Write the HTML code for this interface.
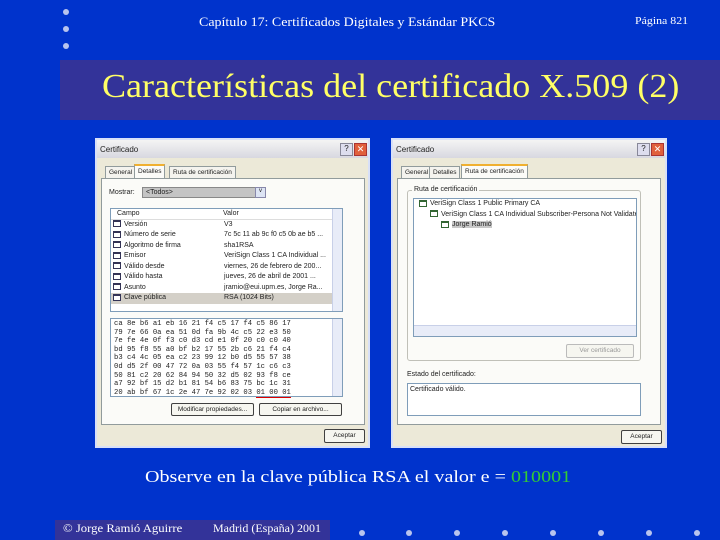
<!DOCTYPE html>
<html><head><meta charset="utf-8"><style>
*{margin:0;padding:0;box-sizing:border-box}
body{width:720px;height:540px;background:#0033cc;position:relative;overflow:hidden;font-family:"Liberation Serif",serif}
.a{position:absolute}
.sx{transform-origin:0 0;white-space:nowrap}
.dot{position:absolute;width:6px;height:6px;border-radius:50%;background:#b8c4ee}
.dlg{position:absolute;background:#ece9d8;border:2px solid #d8e0f8;font-family:"Liberation Sans",sans-serif;font-size:7px;color:#222}
.tb{position:absolute;left:0;right:0;top:0;height:18px;background:linear-gradient(#f4f4f4,#d8d8e0);font-size:8px;padding:5px 3px}
.btn{position:absolute;background:#f6f6f0;border:1px solid #404040;border-radius:2px;font-size:6.5px;text-align:center;line-height:12px}
.wb{position:absolute;background:#fff;border:1px solid #7f9db9}
.sb{position:absolute;background:#e8ecf8;border-left:1px solid #c8d0e8}
.tab{position:absolute;height:12px;border:1px solid #919b9c;border-bottom:none;background:#f4f3ee;font-size:6.5px;padding:2px 3px}
.row{height:10.5px;line-height:10.5px;white-space:nowrap;overflow:hidden}
.ic{display:inline-block;width:8px;height:7px;border:1px solid #335;border-top:2px solid #335;background:#fff;vertical-align:middle;margin:0 3px 0 2px}
.hex{font-family:"Liberation Mono",monospace;font-size:7.2px;line-height:8.6px;white-space:pre;padding:1px 3px}
</style></head><body>
<div class="dot" style="left:63px;top:9px"></div>
<div class="dot" style="left:63px;top:26px"></div>
<div class="dot" style="left:63px;top:43px"></div>
<div class="a sx" style="left:199px;top:15px;color:#fff;font-size:12.5px;transform:scaleX(1.117)">Capítulo 17: Certificados Digitales y Estándar PKCS</div>
<div class="a sx" style="left:635px;top:15px;color:#fff;font-size:11px;transform:scaleX(1.08)">Página 821</div>
<div class="a" style="left:60px;top:60px;width:660px;height:60px;background:#333399"></div>
<div class="a sx" style="left:102px;top:68px;color:#ffff66;font-size:34px;transform:scaleX(1.06)">Características del certificado X.509 (2)</div>

<!-- Left dialog -->
<div class="dlg" style="left:95px;top:138px;width:275px;height:310px">
 <div class="tb">Certificado</div>
 <div class="a" style="left:243px;top:3px;width:13px;height:13px;background:#dde;border:1px solid #889;font-size:8px;text-align:center">?</div>
 <div class="a" style="left:257px;top:3px;width:13px;height:13px;background:#e0603c;border:1px solid #a33;color:#fff;font-size:9px;text-align:center;line-height:11px">✕</div>
 <div class="a" style="left:4px;top:38px;width:264px;height:247px;background:#fbfbf8;border:1px solid #919b9c"></div>
 <div class="tab" style="left:8px;top:26px">General</div>
 <div class="tab" style="left:37px;top:24px;height:14px;background:#fbfbf8;border-top:2px solid #f0b030">Detalles</div>
 <div class="tab" style="left:72px;top:26px">Ruta de certificación</div>
 <div class="a" style="left:12px;top:49px">Mostrar:</div>
 <div class="a" style="left:45px;top:47px;width:124px;height:11px;background:#c4c4c4;border:1px solid #888;padding-left:3px;line-height:9px">&lt;Todos&gt;</div>
 <div class="a" style="left:158px;top:47px;width:11px;height:11px;background:#dde4f4;border:1px solid #88a;font-size:6px;text-align:center">v</div>
 <div class="wb" style="left:13px;top:68px;width:233px;height:104px">
  <div class="row" style="border-bottom:1px solid #ddd;padding-left:6px;position:relative">Campo<span style="position:absolute;left:112px">Valor</span></div>
  <div style="position:relative">
  <div class="row"><span class="ic"></span>Versión<span style="position:absolute;left:113px">V3</span></div>
  <div class="row"><span class="ic"></span>Número de serie<span style="position:absolute;left:113px">7c 5c 11 ab 9c f0 c5 0b ae b5 ...</span></div>
  <div class="row"><span class="ic"></span>Algoritmo de firma<span style="position:absolute;left:113px">sha1RSA</span></div>
  <div class="row"><span class="ic"></span>Emisor<span style="position:absolute;left:113px">VeriSign Class 1 CA Individual ...</span></div>
  <div class="row"><span class="ic"></span>Válido desde<span style="position:absolute;left:113px">viernes, 26 de febrero de 200...</span></div>
  <div class="row"><span class="ic"></span>Válido hasta<span style="position:absolute;left:113px">jueves, 26 de abril de 2001 ...</span></div>
  <div class="row"><span class="ic"></span>Asunto<span style="position:absolute;left:113px">jramio@eui.upm.es, Jorge Ra...</span></div>
  <div class="row" style="background:#d4d0c8"><span class="ic"></span>Clave pública<span style="position:absolute;left:113px">RSA (1024 Bits)</span></div>
  </div>
  <div class="sb" style="right:0;top:0;width:10px;height:102px"></div>
 </div>
 <div class="wb" style="left:13px;top:178px;width:233px;height:79px">
<div class="hex">ca 8e b6 a1 eb 16 21 f4 c5 17 f4 c5 86 17
79 7e 66 0a ea 51 0d fa 9b 4c c5 22 e3 50
7e fe 4e 0f f3 c0 d3 cd e1 0f 20 c0 c0 40
bd 95 f8 55 a0 bf b2 17 55 2b c6 21 f4 c4
b3 c4 4c 05 ea c2 23 99 12 b0 d5 55 57 38
0d d5 2f 00 47 72 0a 03 55 f4 57 1c c6 c3
50 81 c2 20 62 84 94 50 32 d5 02 93 f8 ce
a7 92 bf 15 d2 b1 81 54 b6 83 75 bc 1c 31
20 ab bf 67 1c 2e 47 7e 92 02 03 <span style="border-bottom:1px solid #d00">01 00 01</span></div>
  <div class="sb" style="right:0;top:0;width:10px;height:77px"></div>
 </div>
 <div class="btn" style="left:74px;top:263px;width:83px;height:13px">Modificar propiedades...</div>
 <div class="btn" style="left:162px;top:263px;width:83px;height:13px">Copiar en archivo...</div>
 <div class="btn" style="left:227px;top:289px;width:41px;height:14px">Aceptar</div>
</div>

<!-- Right dialog -->
<div class="dlg" style="left:391px;top:138px;width:276px;height:310px">
 <div class="tb">Certificado</div>
 <div class="a" style="left:244px;top:3px;width:13px;height:13px;background:#dde;border:1px solid #889;font-size:8px;text-align:center">?</div>
 <div class="a" style="left:258px;top:3px;width:13px;height:13px;background:#e0603c;border:1px solid #a33;color:#fff;font-size:9px;text-align:center;line-height:11px">✕</div>
 <div class="a" style="left:4px;top:38px;width:264px;height:247px;background:#fbfbf8;border:1px solid #919b9c"></div>
 <div class="tab" style="left:8px;top:26px">General</div>
 <div class="tab" style="left:36px;top:26px">Detalles</div>
 <div class="tab" style="left:68px;top:24px;height:14px;background:#fbfbf8;border-top:2px solid #f0b030">Ruta de certificación</div>
 <div class="a" style="left:14px;top:50px;width:234px;height:171px;border:1px solid #c0c0b8;border-radius:3px"></div>
 <div class="a" style="left:19px;top:46px;background:#fbfbf8;padding:0 2px">Ruta de certificación</div>
 <div class="wb" style="left:20px;top:58px;width:224px;height:139px;overflow:hidden">
  <div class="row" style="padding-left:3px"><span class="ic" style="border-color:#363"></span>VeriSign Class 1 Public Primary CA</div>
  <div class="row" style="padding-left:14px"><span class="ic" style="border-color:#363"></span>VeriSign Class 1 CA Individual Subscriber-Persona Not Validated</div>
  <div class="row" style="padding-left:25px"><span class="ic" style="border-color:#363"></span><span style="background:#c8c8c8">Jorge Ramió</span></div>
  <div class="a" style="left:0;bottom:0;width:222px;height:11px;background:#e8ecf8;border-top:1px solid #c8d0e8"></div>
 </div>
 <div class="btn" style="left:173px;top:204px;width:68px;height:14px;color:#999;border-color:#bbb">Ver certificado</div>
 <div class="a" style="left:14px;top:231px">Estado del certificado:</div>
 <div class="wb" style="left:14px;top:243px;width:234px;height:33px;padding:2px">Certificado válido.</div>
 <div class="btn" style="left:228px;top:290px;width:41px;height:14px">Aceptar</div>
</div>

<div class="a sx" style="left:145px;top:467px;color:#fff;font-size:16.5px;transform:scaleX(1.217)">Observe en la clave pública RSA el valor e = <span style="color:#33cc33">010001</span></div>

<div class="a" style="left:55px;top:520px;width:275px;height:20px;background:#333399"></div>
<div class="a sx" style="left:63px;top:521px;color:#fff;font-size:12px;transform:scaleX(1.06)">© Jorge Ramió Aguirre</div>
<div class="a sx" style="left:213px;top:521px;color:#fff;font-size:12px">Madrid (España) 2001</div>
<div class="dot" style="left:359px;top:530px"></div>
<div class="dot" style="left:406px;top:530px"></div>
<div class="dot" style="left:454px;top:530px"></div>
<div class="dot" style="left:502px;top:530px"></div>
<div class="dot" style="left:550px;top:530px"></div>
<div class="dot" style="left:598px;top:530px"></div>
<div class="dot" style="left:646px;top:530px"></div>
<div class="dot" style="left:694px;top:530px"></div>
</body></html>
